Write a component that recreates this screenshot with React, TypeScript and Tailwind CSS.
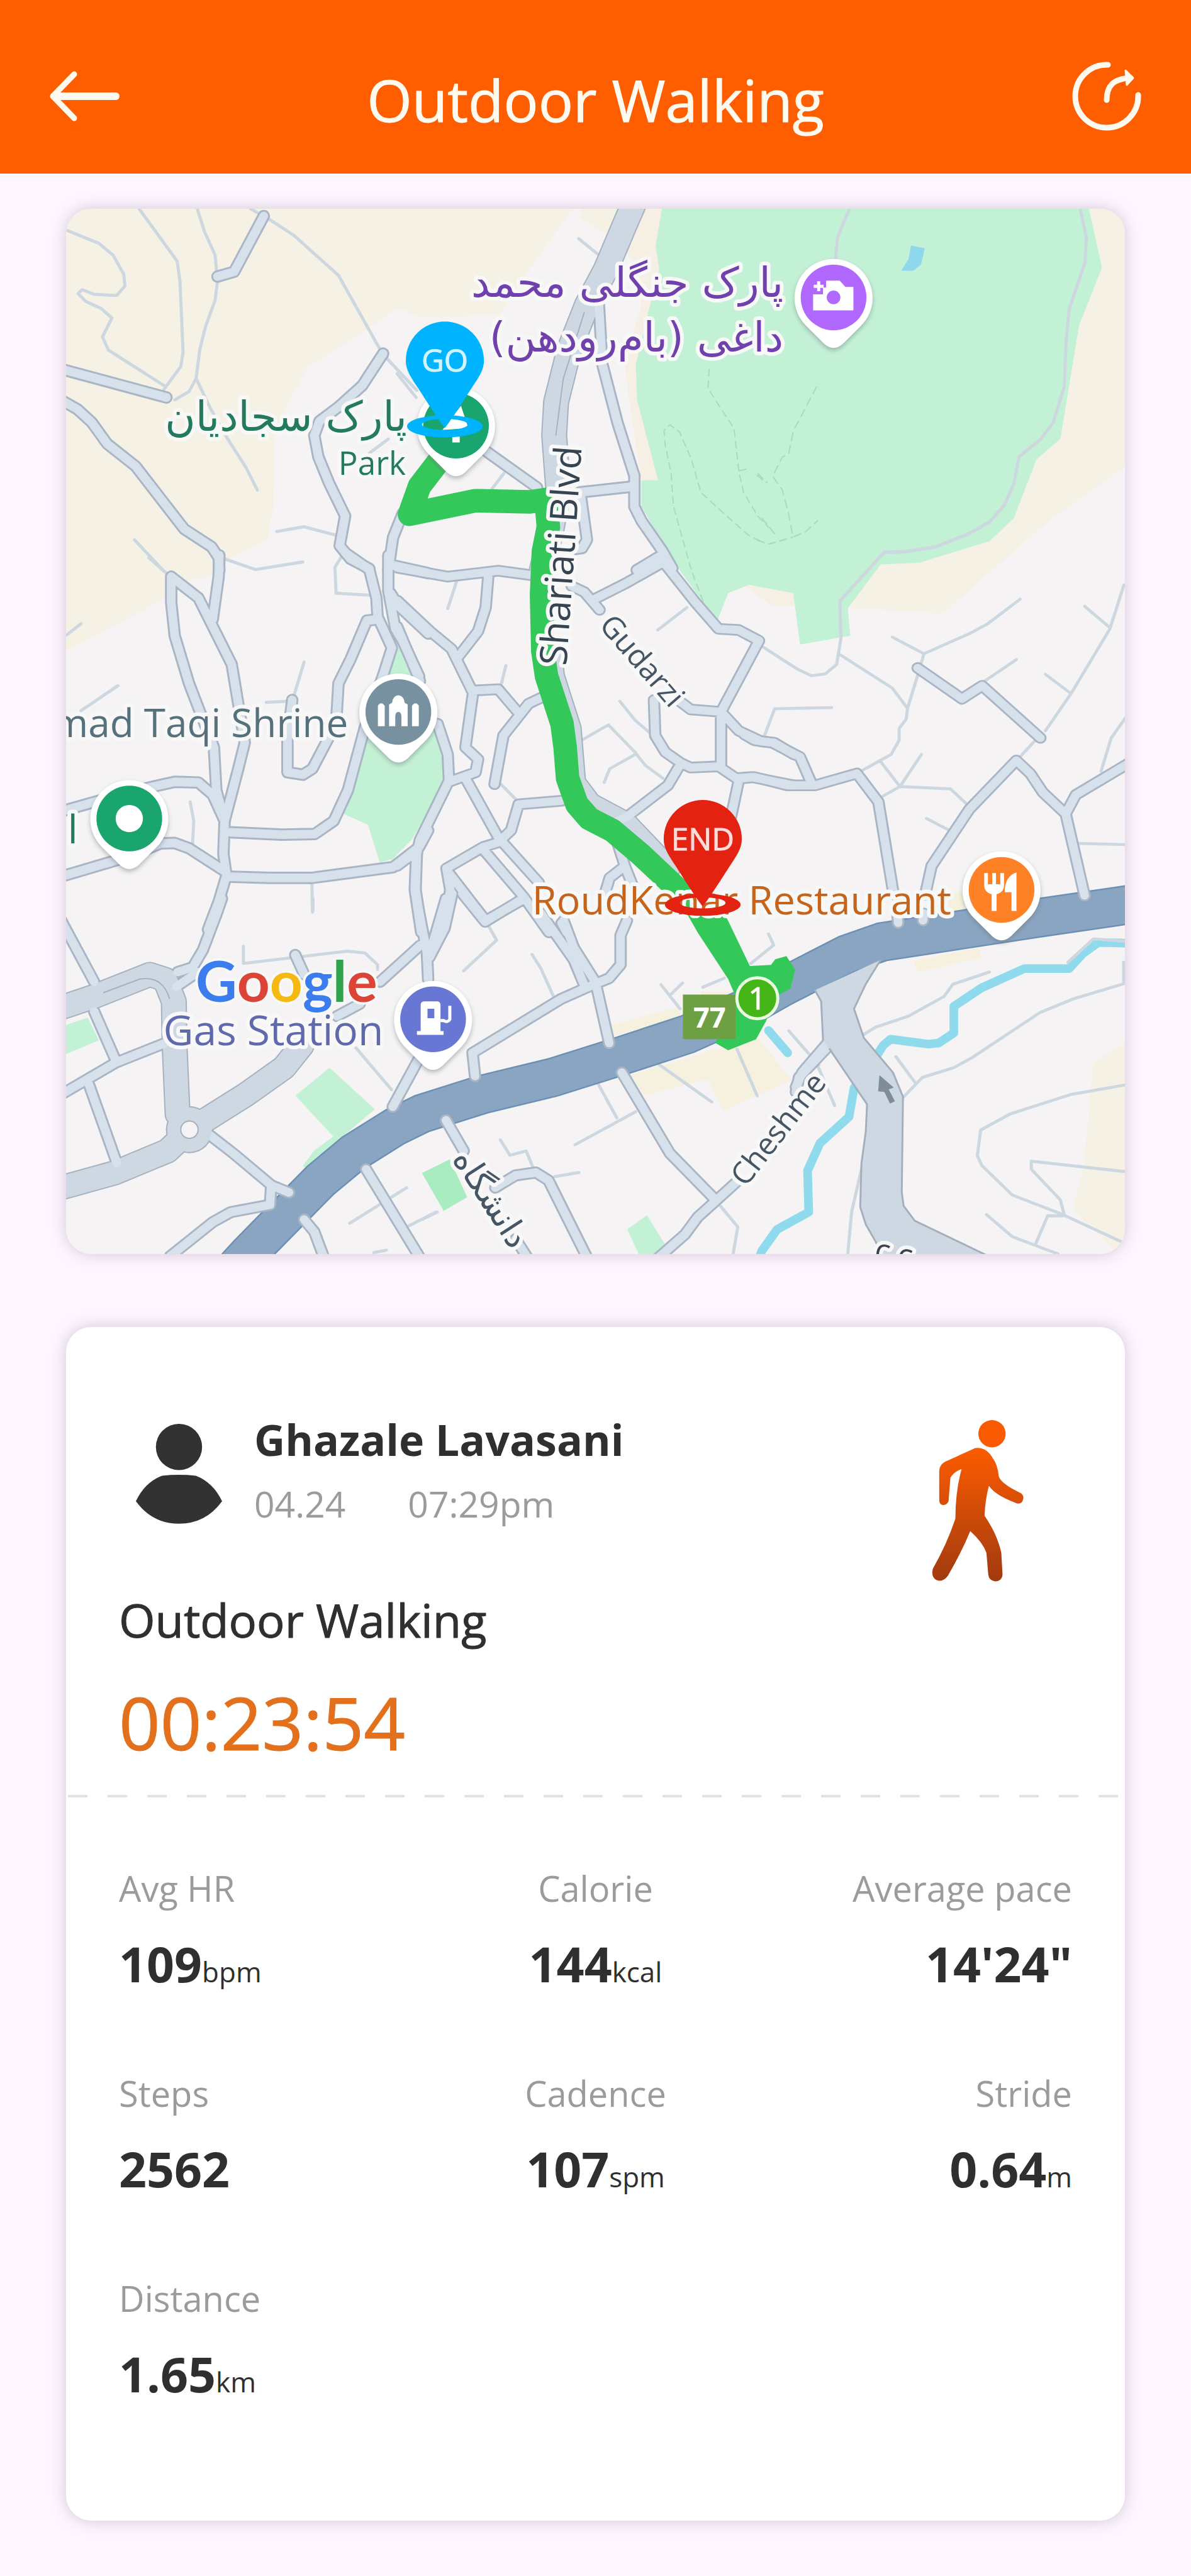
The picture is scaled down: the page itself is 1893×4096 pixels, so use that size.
import React from "react";

type Section = {
  x: number;
  y: number;
  sx: number;
  sy: number;
  streets?: string;
  lanes?: string;
  avenues?: string;
  trails?: string;
};

/* The map is drawn from nine sections, each with its own local grid. */
const sections: Section[] = [
  {
    x: 90, y: 320, sx: 0.3827, sy: 0.3827,
    streets:
      "M875 75 L750 310 L680 330 M20 720 L465 840 M20 850 L90 890 L150 945 L215 1035 L335 1130 L540 1395 L655 1470 L685 1515 L688 1568 M1378 655 L1290 790 L1190 880 L1110 940 L1088 1000 L1105 1090 L1150 1200 L1218 1340 L1195 1465 L1240 1520 L1320 1562 M1460 1330 L1420 1430 L1400 1568",
    lanes:
      "M350 45 L510 265 L522 350 L535 650 L525 710 L455 805 M595 45 L625 140 L670 240 L680 350 L670 430 L630 540 L605 640 L590 760 L560 815 L500 850 M45 135 L180 190 L240 240 L285 320 L290 370 L255 410 L160 405 L110 385 L92 402 L125 435 L190 465 L235 505 L195 585 L220 640 L455 790 M820 45 L900 90 L1000 155 L1190 325 L1375 655 L1520 810 M590 760 L650 885 L720 1010 L800 1135 L848 1230 M330 1440 L450 1568 M930 1405 L1045 1385 L1175 1420 M1320 1075 L1400 1015",
  },
  {
    x: 640, y: 320, sx: 0.3827, sy: 0.3827,
    streets:
      "M850 440 L865 700 L930 950 L1000 1170 L1000 1300 L1030 1360 L1120 1490 L1160 1560 M380 1070 L590 1220 M770 1240 L1000 1215 M775 1260 L800 1440 L780 1475 L740 1480 M1115 1505 L1010 1568",
    avenues:
      "M995 30 L960 110 L880 300 L800 450 L725 640 L670 860 L662 1000 L680 1240 L650 1400 L610 1568",
    lanes: "M765 170 L845 235 M400 1225 L450 1160 M0 740 L80 840",
    trails:
      "M1315 720 L1310 800 L1360 880 L1420 970 L1440 1150 L1460 1240 L1520 1340 L1568 1390 M1440 1150 L1480 1140 M1520 1160 L1560 1200 M1290 1700 L1240 1568 L1165 1300 L1155 1160 L1130 1040 L1125 980 L1150 955 L1190 985 L1240 1100 L1280 1240 L1400 1350 L1480 1420 L1550 1455",
  },
  {
    x: 1220, y: 320, sx: 0.3954, sy: 0.4464,
    lanes:
      "M1320 40 L1345 140 L1340 230 L1275 400 L1262 520 L1255 680 L1210 810 L1160 870 L1070 935 L1050 1030 L1010 1110 L950 1170 L860 1215 L730 1260 L600 1278 L520 1280 L340 1455 L342 1568 M378 40 L330 140 L322 215",
    trails:
      "M245 680 L180 790 L150 840 L130 925 L105 935 L65 1005 L105 1055 L130 1140 L148 1225 L200 1205 L250 1165 M0 1000 L40 1030 M20 1155 L75 1215 M0 1235 L50 1250 L148 1225",
  },
  {
    x: 90, y: 900, sx: 0.3827, sy: 0.3827,
    streets:
      "M485 80 L485 190 L500 330 L560 530 L610 660 L665 800 L675 980 L710 1110 M485 80 L600 170 L660 290 L740 450 L765 600 L795 780 L765 900 L710 1110 L705 1250 L718 1340 M688 -10 L685 80 L660 260 M1220 -20 L1320 50 L1350 170 L1355 250 L1415 380 L1380 490 M1400 -10 L1400 140 L1430 300 L1460 350 L1530 500 M1410 30 L1568 65 M1410 150 L1440 200 L1568 320 M1340 262 L1310 265 L1240 430 L1190 530 L1180 700 L1080 890 L1040 915 L975 905 L975 760 L995 600 M1380 490 L1300 720 L1230 980 L1170 1110 L1090 1165 L950 1168 L735 1158 M20 1070 L250 1005 L410 965 L500 945 L600 948 L660 1000 L710 1110 M20 1345 L290 1265 L440 1205 L500 1203 L560 1225 L715 1325 M718 1345 L900 1350 L1080 1350 L1420 1305 L1530 1220 L1568 1150 M718 1340 L685 1450 L640 1568 M1520 1250 L1515 1400 L1540 1568",
    lanes:
      "M390 0 L470 70 M710 5 L840 50 L1040 18 M1200 0 L1175 40 L1180 150 L1320 158 M45 325 L105 278 M105 645 L260 540 M1045 440 L1000 590 M885 610 L985 605 M565 1030 L580 1110 L575 1210 M1078 1370 L1080 1495",
  },
  {
    x: 640, y: 900, sx: 0.4082, sy: 0.3827,
    streets:
      "M0 42 L200 80 L400 55 L540 75 M690 120 L740 145 L800 220 M360 80 L350 210 L320 310 L240 420 M0 180 L130 310 L215 385 L300 570 L270 800 L320 850 L310 905 L205 945 M0 290 L90 520 M160 700 L200 830 L205 940 L90 1190 L75 1260 L70 1400 L95 1580 M300 560 L400 555 L480 655 M570 590 L520 615 L420 750 L385 955 M770 180 L900 110 L1050 20 M1050 15 L1180 190 L1270 300 L1350 305 L1430 350 L1280 650 M1110 600 L1160 640 L1280 650 L1280 880 M1280 650 L1350 730 L1440 775 L1490 780 L1568 830 M1015 600 L1020 750 L1060 820 L1120 865 L1160 885 L1270 880 L1340 930 L1400 925 L1568 960 M1120 870 L1070 960 L905 1095 L870 1110 M1350 940 L1320 1090 M650 1025 L480 1040 L450 1150 L400 1200 L340 1220 L195 1310 L210 1400 L185 1568 M270 930 L400 1180 L560 1370 M340 1230 L500 1430 L600 1580 M205 1330 L350 1530 L500 1440 M75 1240 L0 1300 M870 1200 L900 1300 L930 1380 M900 1300 L840 1350 L820 1420 M650 1540 L670 1580",
    avenues:
      "M600 380 L612 500 L678 720 L696 950 L760 1040 L900 1120 L1070 1310",
    lanes:
      "M235 100 L200 215 M1145 210 L1030 305 M430 455 L410 540 M880 605 L940 685 L1000 740 M720 775 L835 705 L940 820 L980 875 L1050 930 M940 830 L840 890 L818 948 M410 955 L470 1020",
  },
  {
    x: 1200, y: 900, sx: 0.4082, sy: 0.3827,
    streets:
      "M0 745 L40 770 L110 780 L220 840 L265 950 M0 930 L40 925 L170 960 L280 960 L445 910 L530 1030 L590 1420 M685 465 L860 595 L940 540 L1170 760 M715 1420 L740 1300 L890 1060 L1075 855 L1130 910 L1180 990 L1270 1080 L1310 1000 L1530 860 M1270 1080 L1345 1425 M605 1500 L608 1540 M710 1500 L706 1530",
    lanes:
      "M65 370 L130 415 L210 470 L265 498 L320 490 L365 450 L382 340 L378 200 M380 410 L585 550 L645 635 L690 480 L710 405 L890 320 L960 280 L1090 175 M585 335 L710 405 M645 635 L640 680 L612 720 L612 770 L580 830 L470 895 M535 855 L615 965 L700 830 M540 1010 L615 965 L815 975 L885 1045 M720 1100 L820 1155 M950 520 L1075 430 M1190 730 L1290 575 L1445 300 L1500 115 M1345 205 L1445 295 M1190 492 L1290 572 M1150 770 L1085 845 M1410 900 L1450 760 L1510 670 M1325 1205 L1510 1210 M80 750 L120 637 L345 632",
  },
  {
    x: 90, y: 1450, sx: 0.4082, sy: 0.3954,
    streets:
      "M20 90 L150 340 M150 460 L235 660 M20 800 L235 670 L430 590 M130 760 L240 1080 M655 0 L635 60 L580 210 L540 280 L480 300 M475 360 L560 300 M1420 -20 L1465 220 L1470 330 M1540 0 L1475 230 M1440 190 L1280 340 M1110 480 L1200 430 M600 960 L700 1040 L850 1170 L920 1200 M850 1170 L845 1250 L690 1280 L620 1320 L450 1460 M980 1310 L1020 1360 L1060 1470 M1225 1105 L1440 1470 M1430 660 L1330 850 M945 230 L980 310",
    avenues:
      "M20 445 L150 400 L370 310 L430 330 L465 420 L468 600 L480 880 L527 945 L750 800 L900 690 L970 600 M527 945 L440 1030 L230 1120 L20 1180",
    lanes:
      "M1015 0 L1015 50 M740 195 L740 265 L1150 215 L1220 222 L1270 270 L1270 290 M1185 610 L1325 780 M1160 1325 L1385 1180 M1395 1335 L1500 1280 M1255 1445 L1305 1435",
  },
  {
    x: 680, y: 1450, sx: 0.4082, sy: 0.3954,
    streets:
      "M120 -20 L90 120 L30 240 M160 -20 L250 95 L400 0 M470 60 L600 250 L640 350 M560 90 L600 200 L685 340 M810 90 L785 150 L785 270 L740 325 L680 350 L550 410 L200 630 L210 725 M690 360 L740 590 M95 905 L165 1030 M290 1180 L370 1130 L450 1118 L500 1150 L655 1470 M790 710 L980 1040 L1160 1230 M1240 1160 L1160 1235 L1090 1300 L1040 1370 L930 1470 M370 1390 L420 1470 M1600 610 L1490 730 L1478 790",
    lanes:
      "M265 115 L295 170 L165 295 M435 228 L470 285 L520 400 M605 1005 L845 870 M685 735 L770 895 M310 985 L348 1048 L412 1030 L440 1100 M525 1135 L620 1118 M1180 1255 L1248 1340 L1230 1450 M1245 615 L1325 805 M920 665 L1145 830 M1450 540 L1568 680 M1110 362 L1195 325 M945 352 L1020 450 M980 395 L1030 345 M1370 145 L1390 190 L1300 265 M0 1310 L60 1280",
  },
  {
    x: 1220, y: 1450, sx: 0.4082, sy: 0.3954,
    streets: "M280 590 L180 710 L155 770",
    lanes:
      "M415 560 L470 525 L600 480 L740 400 L775 350 L920 300 M580 810 L655 730 L780 690 L850 650 L1120 465 L1250 410 L1450 348 L1450 260 M550 645 L625 750 M1460 760 L1240 800 L1000 880 L885 945 L872 1050 L890 1090 L1010 1210 L1210 1290 L1440 1400 M1460 1115 L1085 1072 L1085 1105 L1200 1230 L1215 1290 M1100 1415 L1150 1295 L1210 1295 M908 1290 L1010 1380 L1190 1450 M415 1100 L375 1280 L360 1450 M240 680 L308 845 M1230 260 L1330 165 L1460 175",
  },
];

function Layer({ kind, stroke, width, dash }: { kind: "streets" | "lanes" | "avenues" | "trails"; stroke: string; width: number; dash?: string }) {
  return (
    <g fill="none" stroke={stroke} strokeLinejoin="round" strokeLinecap={kind === "trails" ? "butt" : "round"} strokeDasharray={dash}>
      {sections.map((s) =>
        s[kind] ? (
          <path
            key={`${s.x}-${s.y}`}
            d={s[kind]}
            strokeWidth={width / s.sx}
            transform={`translate(${s.x} ${s.y}) scale(${s.sx} ${s.sy})`}
          />
        ) : null,
      )}
    </g>
  );
}

function PlacePin({ x, y, color, children }: { x: number; y: number; color: string; children?: React.ReactNode }) {
  const shape = "M-44 46 L-15 75 Q0 88 15 75 L44 46 A63 63 0 1 0 -44 46 Z";
  return (
    <g transform={`translate(${x} ${y})`}>
      <path d={shape} fill="#6b7280" opacity="0.45" transform="translate(0 4)" filter="url(#pin-shadow)" />
      <path d={shape} fill="#ffffff" />
      <circle r="53" fill={color} />
      {children}
    </g>
  );
}

function RoutePin({ x, y, color, ink, label }: { x: number; y: number; color: string; ink: string; label: string }) {
  return (
    <g transform={`translate(${x} ${y})`}>
      <path
        fillRule="evenodd"
        fill={color}
        d="M-61 106 A61 18 0 1 1 61 106 A61 18 0 1 1 -61 106 Z M-37 103 A37 9 0 1 0 37 103 A37 9 0 1 0 -37 103 Z"
      />
      <path d="M0 109 C-10 96 -28 68 -42 46 C-54 28 -63 16 -63 0 A63 63 0 0 1 63 0 C63 16 54 28 42 46 C28 68 10 96 0 109 Z" fill={color} />
      <text x="0" y="18" textAnchor="middle" fontSize="50" fill={ink} stroke={ink} strokeWidth="1">
        {label}
      </text>
    </g>
  );
}

function RouteMap() {
  const highway =
    "M370 2056 L400 2023 L516 1905 L570 1860 L637 1818 L680 1797 L778 1766 L890 1739 L998 1705 L1108 1669 L1200 1628 L1260 1594 L1316 1565 L1365 1540 L1422 1520 L1546 1501 L1669 1482 L1840 1457";
  return (
    <svg viewBox="106 337 1708 1687" className="block h-auto w-full rounded-[40px] shadow-[0_0_26px_rgba(60,30,60,0.22)]" role="img" aria-label="Route map">
      <defs>
        <filter id="pin-shadow" x="-20%" y="-20%" width="140%" height="140%">
          <feGaussianBlur stdDeviation="4" />
        </filter>
      </defs>
      <rect x="106" y="337" width="1708" height="1687" fill="#f5f3f4" />

      <g fill="#f5f1e5">
        <path d="M106 337 H923 L908 358 L850 439 L805 508 L678 513 L641 496 L588 534 L496 592 L461 657 L442 703 L440 818 L431 871 L377 898 L339 931 L304 936 L274 961 L216 992 L113 1047 L106 1050 Z" />
        <path d="M938 337 H1000 L977 377 L935 351 Z" />
        <path d="M1756 337 H1814 V753 L1694 838 L1520 990 L1372 981 L1400 900 Z" />
        <path d="M1814 1683 L1763 1715 L1748 1880 L1730 1952 L1804 2024 H1814 Z" />
      </g>
      <path fill="#f5efe4" d="M1038 337 H1080 V775 H1034 L1017 664 L1007 588 L1034 492 L1030 440 L1010 405 Z M1200 944 L1245 978 H1281 L1279 957 Z" />
      <g fill="#f6f0de">
        <path d="M986 1654 L1092 1626 L1100 1644 L990 1671 Z M1130 1600 H1190 V1615 H1130 Z" />
        <path d="M1015 1735 L1149 1695 L1223 1676 L1276 1743 L1166 1792 L1141 1741 L1039 1768 Z" />
        <path d="M1473 1551 L1579 1529 L1583 1545 L1481 1569 Z M1530 1440 H1560 V1490 H1530 Z" />
      </g>
      <g fill="#c3f1d5">
        <path d="M1067 337 L1057 397 L1063 435 L1046 500 L1025 588 L1027 645 L1042 703 L1061 775 L1034 775 L1034 817 L1081 900 L1156 1003 L1174 957 L1207 944 L1279 957 L1290 1040 L1371 1026 L1367 982 L1420 911 L1483 908 L1596 873 L1635 836 L1671 742 L1710 708 L1740 525 L1777 432 L1756 337 Z" />
        <path d="M643 1042 L626 1084 L588 1195 L553 1313 L593 1331 L612 1392 L633 1386 L664 1355 L715 1264 L713 1225 L701 1183 L664 1091 Z" />
        <path d="M106 1654 L141 1642 L159 1679 L106 1701 Z M531 1723 L604 1790 L492 1885 L488 1881 L506 1857 L537 1834 L476 1768 Z M1043 1961 L1074 2011 L1060 2024 H1030 L1011 1984 Z" />
      </g>
      <path fill="#a9ecc1" d="M680 1893 L725 1871 L753 1932 L715 1954 Z" />
      <path fill="#8fd8ec" d="M1469 396 L1491 401 L1485 427 L1473 437 H1453 L1465 418 Z" />

      <g fill="none" stroke="#8fdaec" strokeWidth="14" strokeLinejoin="round">
        <path d="M1816 1522 L1771 1521 L1746 1539 L1724 1563 L1652 1563 L1583 1594 L1538 1624 V1667 L1514 1683 L1497 1685 L1436 1677 L1424 1687 L1414 1703 L1377 1756 L1369 1802 L1322 1845 L1302 1889 L1304 1956 L1253 1984 L1228 2019 L1224 2030" />
        <path d="M1239 1663 L1270 1699" strokeLinecap="round" />
      </g>

      <Layer kind="trails" stroke="#a6dcbc" width={2} dash="32 16" />
      <Layer kind="lanes" stroke="#cdd7e0" width={5} />
      <path d={highway} fill="none" stroke="#6c90b4" strokeWidth="64" />
      <path d={highway} fill="none" stroke="#8aa5c1" strokeWidth="59" />
      <Layer kind="streets" stroke="#a9b5c4" width={20} />
      <Layer kind="avenues" stroke="#a6b1bf" width={42} />
      <circle cx="305" cy="1823" r="38" fill="#a6b1bf" />
      <Layer kind="avenues" stroke="#cdd8e2" width={38} />
      <Layer kind="streets" stroke="#d6e1ec" width={14} />
      <circle cx="305" cy="1823" r="36" fill="#cdd8e2" />
      <circle cx="305" cy="1823" r="14" fill="#f5f3f4" stroke="#a6b1bf" strokeWidth="2" />
      <path d="M942 504 L908 611 L896 703 M166 1602 L225 1580 Q262 1574 273 1612" fill="none" stroke="#a6b1bf" strokeWidth="2" />

      <path
        fill="#cdd8e2"
        d="M1314 1598 L1324 1616 L1327 1679 L1398 1782 L1396 1826 L1389 1877 L1387 1948 L1396 1976 L1412 2004 L1424 2030 H1600 L1475 1970 L1457 1946 L1454 1924 L1456 1770 L1440 1731 L1393 1675 L1377 1628 L1396 1588 L1420 1549 Z"
      />
      <path
        fill="none"
        stroke="#a3afbd"
        strokeWidth="3"
        d="M1314 1598 L1324 1616 L1327 1679 M1337 1692 L1398 1782 L1396 1826 L1389 1877 L1387 1948 L1396 1976 L1412 2004 L1424 2030 M1600 2030 L1475 1970 L1457 1946 L1454 1924 L1456 1770 L1440 1731 L1393 1675 L1377 1628 L1396 1588 L1420 1549"
      />
      <path fill="#7f8d9b" d="M1418 1735 L1441 1755 L1433 1758 L1443 1777 L1435 1781 L1426 1762 L1416 1761 Z" />

      <path
        fill="none"
        stroke="#34c759"
        strokeLinejoin="round"
        strokeWidth="38"
        d="M712 738 L676 785 L660 830 L766 808 L854 810 L880 806 L884 850 L876 890 L873 960 L875 1050 L881 1091 L906 1168 L911 1206 L915 1256 L930 1298 L950 1321 L987 1340 L1032 1378 L1081 1424 L1130 1470"
      />
      <path
        fill="#34c759"
        d="M1090 1450 L1150 1440 L1174 1486 L1209 1559 L1243 1557 L1250 1548 L1268 1543 L1282 1565 L1274 1596 L1251 1608 L1235 1648 L1219 1677 L1174 1695 L1153 1683 L1186 1608 L1174 1580 L1125 1505 L1105 1470 Z"
      />

      <g stroke="#f8f8f8" strokeWidth="12" strokeLinejoin="round" className="[paint-order:stroke]">
        <text x="1263" y="479" direction="rtl" fontSize="67" fill="#7040ad" className="font-['DejaVu_Sans',sans-serif]">
          پارک جنگلی محمد
        </text>
        <text x="1263" y="567" direction="rtl" fontSize="67" fill="#7040ad" className="font-['DejaVu_Sans',sans-serif]">
          داغی (بام‌رودهن)
        </text>
        <text x="656" y="695" direction="rtl" fontSize="67" fill="#237b5c" className="font-['DejaVu_Sans',sans-serif]">
          پارک سجادیان
        </text>
        <text x="654" y="766" textAnchor="end" fontSize="52" fill="#237b5c">Park</text>
        <text x="561" y="1190" textAnchor="end" fontSize="63" fill="#56707c">mad Taqi Shrine</text>
        <text x="125" y="1361" textAnchor="end" fontSize="64" fill="#237b5c">l</text>
        <text x="618" y="1687" textAnchor="end" fontSize="67" fill="#6068ae">Gas Station</text>
        <text x="1534" y="1476" textAnchor="end" fontSize="64" fill="#c5641a">RoudKenar Restaurant</text>
        <text transform="translate(913 1075) rotate(-86)" fontSize="61" fill="#364350">Shariati Blvd</text>
        <text transform="translate(964 1010) rotate(49)" fontSize="49" fill="#465563">Gudarzi</text>
        <text transform="translate(1202 1917) rotate(-52)" fontSize="49" fill="#465563">Cheshme</text>
        <text transform="translate(776 1944) rotate(57)" textAnchor="middle" fontSize="54" fill="#465563" className="font-['DejaVu_Sans',sans-serif]">
          دانشگاه
        </text>
        <text transform="translate(1408 2032) rotate(12)" fontSize="50" fill="#364350">c c</text>
      </g>
      <text x="315" y="1617" fontSize="92" className="font-['Lato',sans-serif] font-bold [paint-order:stroke]" stroke="#f8f8f8" strokeWidth="8">
        <tspan fill="#3b7ded">G</tspan>
        <tspan fill="#dc4437">o</tspan>
        <tspan fill="#f5b912">o</tspan>
        <tspan fill="#3b7ded">g</tspan>
        <tspan fill="#2fa24c">l</tspan>
        <tspan fill="#dc4437">e</tspan>
      </text>

      <rect x="1101" y="1605" width="85" height="72" fill="#6ca043" />
      <text x="1144" y="1658" textAnchor="middle" fontSize="46" fill="#ffffff" className="font-bold">77</text>
      <circle cx="1221" cy="1611" r="33" fill="#44b416" stroke="#eafbe0" strokeWidth="5" />
      <text x="1221" y="1629" textAnchor="middle" fontSize="50" fill="#ffffff" stroke="#ffffff" strokeWidth="1">1</text>

      <PlacePin x={1344} y={480} color="#b168ff">
        <path fill="#ffffff" fillRule="evenodd" d="M-33 -5 H-17 V-16 H-12 V-27 H10 L19 -17 H32 V21 H-33 Z M11 0 A11 11 0 1 0 -11 0 A11 11 0 1 0 11 0 Z" />
        <path d="M-24 -26 V-10 M-32 -18 H-16" stroke="#ffffff" strokeWidth="5" />
      </PlacePin>
      <PlacePin x={735} y={687} color="#1aa56e">
        <path fill="#ffffff" d="M8 -32 L-22 7 L20 4 Z M-6 14 H6 V27 H-6 Z" />
      </PlacePin>
      <PlacePin x={642} y={1149} color="#7891a0">
        <path fill="#ffffff" d="M-33 23 V-10 Q-28 -18 -22 -10 V23 Z M22 23 V-10 Q28 -18 33 -10 V23 Z M-15 23 V-12 L-10 -15 Q-9 -26 0 -27 Q9 -26 10 -15 L15 -12 V23 H5 V8 Q5 0 0 0 Q-5 0 -5 8 V23 Z" />
      </PlacePin>
      <PlacePin x={208} y={1321} color="#1aa56e">
        <circle r="22" fill="#ffffff" />
      </PlacePin>
      <PlacePin x={1615} y={1436} color="#ff8125">
        <path
          fill="#ffffff"
          d="M-28 -27 H-22 V-9 H-15 V-27 H-9 V-9 H-2 V-27 H4 V-8 Q4 4 -8 7 V34 H-16 V7 Q-28 4 -28 -8 Z M24 -28 Q5 -22 5 4 H16 V34 H24 Z"
        />
      </PlacePin>
      <PlacePin x={698} y={1645} color="#6777d3">
        <path fill="#ffffff" fillRule="evenodd" d="M-20 -23 Q-20 -29 -14 -29 H6 Q12 -29 12 -23 V19 H17 V25 H-26 V19 H-20 Z M-9 -17 V-2 H2 V-17 Z" />
        <path d="M12 2 H17 Q23 6 27 0 V-22" fill="none" stroke="#ffffff" strokeWidth="5" />
      </PlacePin>

      <RoutePin x={717} y={582} color="#00b3ff" ink="#d2f4ff" label="GO" />
      <RoutePin x={1133} y={1354} color="#e32212" ink="#ffdcd9" label="END" />
    </svg>
  );
}

const stats = [
  { label: "Avg HR", value: "109", unit: "bpm", align: "text-left" },
  { label: "Calorie", value: "144", unit: "kcal", align: "text-center" },
  { label: "Average pace", value: "14'24\"", unit: "", align: "text-right" },
  { label: "Steps", value: "2562", unit: "", align: "text-left" },
  { label: "Cadence", value: "107", unit: "spm", align: "text-center" },
  { label: "Stride", value: "0.64", unit: "m", align: "text-right" },
  { label: "Distance", value: "1.65", unit: "km", align: "text-left" },
];

export default function App() {
  return (
    <div className="min-h-screen bg-[#fdf6ff] font-['Open_Sans','Noto_Sans',sans-serif] text-[#2f2f2f]">
      <header className="flex h-[276px] items-center justify-between bg-[#ff5e00] px-[78px] pt-[30px] text-[#fffaf0]">
        <button type="button" aria-label="Back">
          <svg viewBox="0 0 112 80" className="block w-[112px]" fill="none" stroke="currentColor" strokeWidth="12" strokeLinecap="round" strokeLinejoin="round">
            <path d="M40 5 L6 40 L40 75" strokeWidth="9" />
            <path d="M8 40 H106" />
          </svg>
        </button>
        <h1 className="pt-3 text-[92px] leading-[120px] [-webkit-text-stroke:1px_currentColor]">Outdoor Walking</h1>
        <button type="button" aria-label="Share">
          <svg viewBox="0 0 112 112" className="block w-[112px]" fill="none" stroke="currentColor" strokeWidth="9" strokeLinecap="round" strokeLinejoin="round">
            <path d="M58 6 A50 50 0 1 0 106 54" />
            <path d="M56 62 C56 40 66 28 94 27" />
            <path d="M86 15 L98 27 L88 38 Z" fill="currentColor" strokeWidth="3" />
          </svg>
        </button>
      </header>

      <main className="flex flex-col gap-[116px] px-[105px] pt-14 pb-[89px]">
        <RouteMap />

        <section className="rounded-[40px] bg-white pb-[185px] shadow-[0_0_26px_rgba(60,30,60,0.22)]">
          <div className="px-[84px] pt-[137px]">
            <div className="flex items-start justify-between pr-[77px] pl-[27px]">
              <div className="flex items-start gap-[51px]">
                <svg viewBox="0 0 138 160" className="mt-[17px] block w-[137px]" fill="#323232" role="img" aria-label="Profile">
                  <circle cx="69" cy="37" r="37" />
                  <path d="M42 83 Q69 80 96 83 Q124 94 138 124 Q112 160 69 160 Q26 160 0 124 Q14 94 42 83 Z" />
                </svg>
                <div>
                  <h2 className="text-[68px] leading-[84px] font-bold">Ghazale Lavasani</h2>
                  <p className="mt-6 flex gap-[99px] text-[57px] leading-[72px] text-[#9b9b9b]">
                    <span>04.24</span>
                    <span>07:29pm</span>
                  </p>
                </div>
              </div>
              <svg viewBox="0 0 148 262" className="mt-[10px] block w-[146px]" role="img" aria-label="Walking">
                <defs>
                  <linearGradient id="walker" x1="0" y1="0" x2="0" y2="262" gradientUnits="userSpaceOnUse">
                    <stop offset="0.2" stopColor="#fa5b00" />
                    <stop offset="1" stopColor="#a03a10" />
                  </linearGradient>
                </defs>
                <g fill="url(#walker)">
                  <circle cx="97" cy="23" r="22" />
                  <path d="M70 46 Q88 44 98 62 Q106 72 108 92 Q112 104 144 119 Q150 124 146 132 Q142 138 134 134 Q102 122 92 107 Q86 130 85 155 Q106 186 112 215 L114 250 Q113 261 102 261 Q92 260 91 250 L88 215 Q82 198 62 180 Q48 214 26 252 Q18 263 8 259 Q-2 254 2 240 Q24 202 38 160 Q38 116 48 80 Q36 84 30 94 L27 132 Q24 138 18 138 Q12 137 12 130 V82 Q13 72 22 68 Z" />
                </g>
              </svg>
            </div>
            <h3 className="mt-3 text-[74px] leading-[96px] [-webkit-text-stroke:1px_currentColor]">Outdoor Walking</h3>
            <p className="mt-[47px] text-[115px] leading-[136px] text-[#e2701c] [-webkit-text-stroke:1px_currentColor]">00:23:54</p>
          </div>

          <div className="mx-[3px] mt-[47px] h-1 bg-[repeating-linear-gradient(90deg,#e2e2e2_0_31px,transparent_31px_63px)]" />

          <dl className="grid grid-cols-3 gap-y-[121px] px-[84px] pt-[108px]">
            {stats.map((s) => (
              <div key={s.label} className={s.align}>
                <dt className="text-[56px] leading-[72px] whitespace-nowrap text-[#9b9b9b]">{s.label}</dt>
                <dd className="mt-[37px] h-24 text-[77px] leading-[96px] font-bold whitespace-nowrap">
                  {s.value}
                  {s.unit && <span className="text-[44px] leading-none font-normal">{s.unit}</span>}
                </dd>
              </div>
            ))}
          </dl>
        </section>
      </main>
    </div>
  );
}
